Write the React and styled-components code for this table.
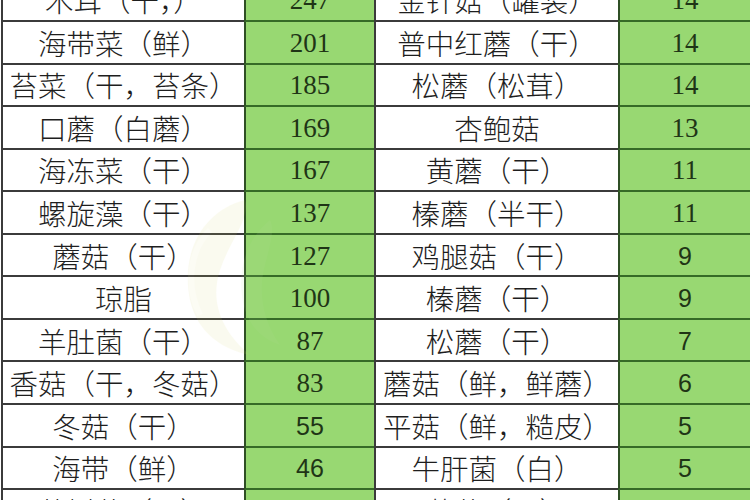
import React from 'react';
import styled, { createGlobalStyle } from 'styled-components';

const GlobalStyle = createGlobalStyle`
  html, body {
    margin: 0;
    padding: 0;
    background: #ffffff;
    overflow: hidden;
  }
`;

const Page = styled.div`
  position: relative;
  width: 750px;
  height: 500px;
  overflow: hidden;
  background: #ffffff;
  padding-left: 1px;
  box-sizing: border-box;
`;

const Table = styled.div`
  margin-top: -20.5px;
  display: flex;
  flex-direction: column;
`;

const Row = styled.div`
  display: grid;
  grid-template-columns: 243px 130px 244px 132px;
  height: 42.55px;
`;

const NameCell = styled.div`
  box-sizing: border-box;
  display: flex;
  align-items: center;
  justify-content: center;
  background: #ffffff;
  border-left: 2px solid #3b3b3b;
  border-bottom: 2px solid #3b3b3b;
  font-family: 'Noto Sans CJK SC', 'Noto Sans', sans-serif;
  font-weight: 300;
  font-size: 28.5px;
  color: #1e1e1e;
  white-space: nowrap;
  overflow: hidden;
`;

const ValueCell = styled.div`
  box-sizing: border-box;
  display: flex;
  align-items: center;
  justify-content: center;
  background: #98d872;
  border-left: 2px solid #2f4f25;
  border-bottom: 2px solid #356b26;
  font-family: ${p => (p.$sans ? "'Liberation Sans', Arial, sans-serif" : "'Liberation Serif', 'Times New Roman', serif")};
  font-size: ${p => (p.$sans ? '25px' : '27px')};
  color: #1f3516;
  padding-top: 2px;
`;

const Watermark = styled.svg`
  position: absolute;
  left: 150px;
  top: 190px;
  width: 150px;
  height: 170px;
  opacity: 0.1;
  pointer-events: none;
`;

const rows = [
  ['木耳（干，）', '247', '金针菇（罐装）', '14'],
  ['海带菜（鲜）', '201', '普中红蘑（干）', '14'],
  ['苔菜（干，苔条）', '185', '松蘑（松茸）', '14'],
  ['口蘑（白蘑）', '169', '杏鲍菇', '13'],
  ['海冻菜（干）', '167', '黄蘑（干）', '11'],
  ['螺旋藻（干）', '137', '榛蘑（半干）', '11'],
  ['蘑菇（干）', '127', '鸡腿菇（干）', '9', false, true],
  ['琼脂', '100', '榛蘑（干）', '9', false, true],
  ['羊肚菌（干）', '87', '松蘑（干）', '7', false, true],
  ['香菇（干，冬菇）', '83', '蘑菇（鲜，鲜蘑）', '6', false, true],
  ['冬菇（干）', '55', '平菇（鲜，糙皮）', '5', true, true],
  ['海带（鲜）', '46', '牛肝菌（白）', '5', true, true],
  ['茶树菇（干）', '42', '草菇（干）', '4', true, true],
];

export default function App() {
  return (
    <>
      <GlobalStyle />
      <Page>
        <Table>
          {rows.map(([a, av, b, bv, sa, sb], i) => (
            <Row key={i}>
              <NameCell>{a}</NameCell>
              <ValueCell $sans={sa}>{av}</ValueCell>
              <NameCell>{b}</NameCell>
              <ValueCell $sans={sb}>{bv}</ValueCell>
            </Row>
          ))}
        </Table>
        <Watermark viewBox="0 0 150 170">
          <path d="M95 10 C55 20 30 60 40 110 C48 145 75 160 100 165 C70 140 60 110 70 80 C80 50 100 30 95 10 Z" fill="#d8d86a" />
          <path d="M120 30 C95 50 85 85 95 120 C102 140 115 150 130 155 C112 130 108 100 115 75 C120 55 125 40 120 30 Z" fill="#b7dca0" />
          <path d="M60 40 C40 60 35 95 50 125" stroke="#e6e4a0" strokeWidth="6" fill="none" />
        </Watermark>
      </Page>
    </>
  );
}
